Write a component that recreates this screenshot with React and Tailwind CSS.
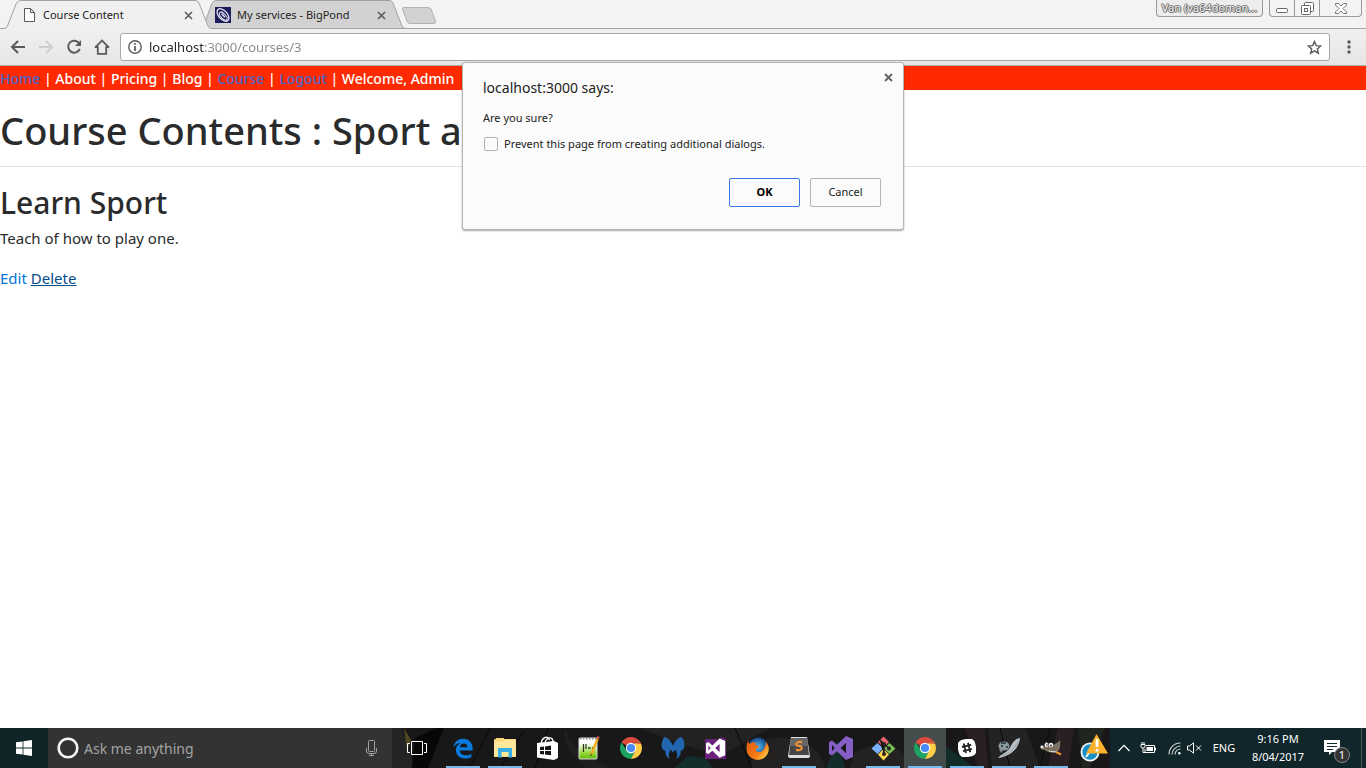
import React from "react";

const ui = "font-['Noto_Sans',sans-serif]";

function TabShapes() {
  return (
    <svg className="absolute left-0 top-0" width="440" height="29" viewBox="0 0 440 29" fill="none" aria-hidden="true">
      <path d="M202 28.5 L205.5 21 L212 3 Q213.5 .5 216 .5 L389 .5 Q392 .5 393 3 L402 26 Q403 28.5 406 28.5 Z" fill="#d2d2d2" stroke="#a2a2a2" />
      <path d="M0 29 V28.500 H4 Q6.500 28.500 7.500 26 L16.500 3 Q18 .5 20.500 .5 H195 Q198 .5 199 3 L208 26 Q209 28.500 211.500 28.500 V29 Z" fill="#f0f0f0" />
      <path d="M0 28.500 H4 Q6.500 28.500 7.500 26 L16.500 3 Q18 .5 20.500 .5 H195 Q198 .5 199 3 L208 26 Q209 28.500 211.500 28.500 H440" stroke="#a2a2a2" />
      <path d="M402.500 9 Q402 7.500 404 7.500 H428 Q430 7.500 431 9 L435.500 21 Q436.500 23.500 434 23.500 H410 Q408 23.500 407 21.500 Z" fill="#d2d2d2" stroke="#b3b3b3" />
    </svg>
  );
}

function Cross({ size = 9, color = "#5a5a5a", width = 1.6 }) {
  return (
    <svg width={size} height={size} viewBox="0 0 9 9" aria-hidden="true">
      <path d="M1 1 L8 8 M8 1 L1 8" stroke={color} strokeWidth={width} />
    </svg>
  );
}

function WindowControls() {
  return (
    <div className="ml-auto flex items-start pr-1">
      <button className="mr-1.5 h-[17px] w-[107px] rounded-b border border-t-0 border-[#9a9a9a] bg-[#ededed] text-[11px] leading-4 text-[#f4f4f4] [text-shadow:1px_0_#555,-1px_0_#777,0_1px_#666,0_-1px_#777]">
        Van (va64doman...
      </button>
      <div className="flex h-[17px] overflow-hidden rounded-b border border-t-0 border-[#9a9a9a]">
        <button aria-label="Minimize" className="flex w-[25px] items-end justify-center border-r border-[#9a9a9a] pb-[3px]">
          <svg width="12" height="5"><rect x=".5" y=".5" width="11" height="4" rx="1" fill="#fff" stroke="#666" /></svg>
        </button>
        <button aria-label="Restore" className="flex w-[25px] items-center justify-center border-r border-[#9a9a9a]">
          <svg width="13" height="13" viewBox="0 0 13 13" fill="#fff" stroke="#666">
            <rect x="3.500" y=".5" width="9" height="9" rx="1" />
            <rect x=".5" y="3.500" width="9" height="9" rx="1" />
            <rect x="3.500" y="6.500" width="3" height="3" />
          </svg>
        </button>
        <button aria-label="Close" className="flex w-[41px] items-center justify-center">
          <svg width="12" height="11" viewBox="0 0 12 11" fill="#fff" stroke="#777">
            <path d="M.5 .5 H3.500 L6 3 L8.500 .5 H11.500 V2 L8 5.500 L11.500 9 V10.500 H8.500 L6 8 L3.500 10.500 H.5 V9 L4 5.500 L.5 2 Z" />
          </svg>
        </button>
      </div>
    </div>
  );
}

function TabStrip() {
  return (
    <div className="relative flex h-[29px] border-b border-[#a2a2a2] bg-[#f3f3f3] text-xs">
      <TabShapes />
      <div className="relative flex w-[204px] items-center pl-6 pr-[11px] pt-0.5">
        <svg className="mr-2 shrink-0" width="11" height="14" viewBox="0 0 11 14" fill="#fff" stroke="#5a5a5a" aria-hidden="true">
          <path d="M.5 .5 H6.500 L10.500 4.500 V13.500 H.5 Z M6.500 .5 V4.500 H10.500" />
        </svg>
        <a href="#course" className="grow text-[11px] text-[#222]">Course Content</a>
        <button aria-label="Close Course Content"><Cross /></button>
      </div>
      <div className="relative flex w-[198px] items-center pl-[11px] pr-4 pt-0.5">
        <svg className="mr-1.5 shrink-0" width="16" height="16" viewBox="0 0 16 16" fill="none" aria-hidden="true">
          <rect width="16" height="16" fill="#1c1c5c" />
          <g stroke="#e8e8f4" transform="rotate(48 8 8)">
            <ellipse cx="8" cy="8" rx="7.500" ry="4.300" strokeWidth="1.300" />
            <ellipse cx="9" cy="8.500" rx="5" ry="2.400" />
            <path d="M6 8 H11" strokeWidth="1.500" />
          </g>
        </svg>
        <a href="#services" className="grow text-[11px] text-[#222]">My services - BigPond</a>
        <button aria-label="Close My services - BigPond"><Cross /></button>
      </div>
      <WindowControls />
    </div>
  );
}

function Toolbar() {
  return (
    <div className="flex h-[37px] items-center border-b border-[#b0b0b0] bg-linear-to-b from-[#f0f0f0] to-[#e6e6e6] pl-2.5 pr-3">
      <div className="flex gap-3 text-[#5a5a5a]">
        <button aria-label="Back">
          <svg width="16" height="16" viewBox="0 0 16 16" fill="none" stroke="#5a5a5a" strokeWidth="2"><path d="M15 8 H2.500 M8 2 L2 8 L8 14" /></svg>
        </button>
        <button aria-label="Forward">
          <svg width="16" height="16" viewBox="0 0 16 16" fill="none" stroke="#cfcfcf" strokeWidth="2"><path d="M1 8 H13.500 M8 2 L14 8 L8 14" /></svg>
        </button>
        <button aria-label="Reload">
          <svg width="16" height="16" viewBox="0 0 16 16" fill="none"><path d="M13.300 4.500 A6 6 0 1 0 13.800 9.800" stroke="#5a5a5a" strokeWidth="2" /><path d="M15 1 V7 H9 Z" fill="#5a5a5a" /></svg>
        </button>
        <button aria-label="Home page">
          <svg width="16" height="16" viewBox="0 0 16 16" fill="none" stroke="#5a5a5a" strokeWidth="1.800"><path d="M1 8.600 L8 1.500 L15 8.600 M1 8.200 H3.800 V14.800 H12.200 V8.200 H15" /></svg>
        </button>
      </div>
      <div className="ml-2.5 flex h-7 grow items-center rounded-[3px] border border-[#a8a8a8] bg-white px-[7px]">
        <svg className="shrink-0" width="14" height="14" viewBox="0 0 14 14" fill="none" aria-hidden="true">
          <circle cx="7" cy="7" r="6.200" stroke="#5a5a5a" strokeWidth="1.400" />
          <path d="M7 3 V4.800 M7 6 V11" stroke="#5a5a5a" strokeWidth="1.700" />
        </svg>
        <input
          aria-label="Address"
          defaultValue="localhost:3000/courses/3"
          className="ml-[7px] w-40 grow bg-[linear-gradient(90deg,#222_56px,#888_56px)] bg-clip-text pt-px text-[13px] text-transparent outline-none"
        />
        <button aria-label="Bookmark this page">
          <svg width="15" height="15" viewBox="0 0 16 16" fill="none" stroke="#5a5a5a" strokeWidth="1.500"><path d="M8 1.700 L9.900 6 L14.600 6.400 L11 9.500 L12.100 14.100 L8 11.600 L3.900 14.100 L5 9.500 L1.400 6.400 L6.100 6 Z" /></svg>
        </button>
      </div>
      <button aria-label="Menu" className="ml-3.5 w-2.5">
        <svg width="10" height="14" viewBox="0 0 10 14" fill="#5a5a5a"><circle cx="5" cy="2" r="1.700" /><circle cx="5" cy="7" r="1.700" /><circle cx="5" cy="12" r="1.700" /></svg>
      </button>
    </div>
  );
}

function Page() {
  return (
    <main className="grow bg-white text-[15px] leading-6 text-[#292b2c]">
      <nav className="h-6 bg-[#ff2a00] pt-px text-sm font-medium leading-6 text-white">
        <a href="#home" className="text-[#4c66c4]">Home</a> | <a href="#about">About</a> | <a href="#pricing">Pricing</a> | <a href="#blog">Blog</a> | <a href="#courses" className="text-[#4c66c4]">Course</a> | <a href="#logout" className="text-[#4c66c4]">Logout</a> | Welcome, Admin
      </nav>
      <h1 className="mt-4 text-[38px] font-medium leading-[48px]">Course Contents : Sport a</h1>
      <hr className="mb-4 mt-3 border-[#e4e4e4]" />
      <h2 className="mb-[3px] text-[30px] font-medium leading-10">Learn Sport</h2>
      <p className="mb-4">Teach of how to play one.</p>
      <a href="#edit" className="text-[#0275d8]">Edit</a> <a href="#delete" className="text-[#014c8c] underline">Delete</a>
    </main>
  );
}

function Dialog() {
  return (
    <div className="absolute inset-x-0 top-[62px] flex justify-center">
      <div role="dialog" aria-labelledby="dialog-title" className="relative w-[442px] rounded-[3px] border border-[#b5b5b5] bg-[#fbfbfb] px-5 pb-[22px] pt-[15px] text-[11px] text-[#222] shadow-[0_1px_2px_rgba(0,0,0,0.35)]">
        <button aria-label="Close dialog" className="absolute right-2.5 top-2.5 flex"><Cross color="#666" width={2} /></button>
        <h2 id="dialog-title" className="text-sm leading-5">localhost:3000 says:</h2>
        <p className="mt-2.5 leading-5">Are you sure?</p>
        <label className="mt-1.5 flex items-center leading-5">
          <input type="checkbox" className="ml-px mr-1.5 size-3.5 appearance-none rounded-xs border border-[#b0b0b0] bg-[#fbfbfb]" />
          Prevent this page from creating additional dialogs.
        </label>
        <div className="mt-6 flex justify-end gap-2.5 pr-0.5">
          <button className="h-[29px] w-[71px] rounded-xs border border-[#3b78e7] font-bold text-black">OK</button>
          <button className="h-[29px] w-[71px] rounded-xs border border-[#b5b5b5]">Cancel</button>
        </div>
      </div>
    </div>
  );
}

function ChromeLogo() {
  return (
    <svg width="22" height="22" viewBox="0 0 22 22">
      <path d="M11 11 L1.500 5.500 A11 11 0 0 1 20.500 5.500 L11 6 Z" fill="#dd4b3e" />
      <path d="M1.500 5.500 A11 11 0 0 0 11 22 L15.300 13.500 L11 11 L6.700 13.500 Z" fill="#1da362" />
      <path d="M20.500 5.500 A11 11 0 0 1 11 22 L15.300 13.500 L14 6 Z" fill="#ffcd46" />
      <path d="M11 6 H20.700 L20.500 5.500 A11 11 0 0 1 21.200 7 Z" fill="#dd4b3e" />
      <circle cx="11" cy="11" r="5.200" fill="#fff" />
      <circle cx="11" cy="11" r="4.100" fill="#4a8af4" />
    </svg>
  );
}

function VisualStudioMark({ color }) {
  return <path fill={color} fillRule="evenodd" d="M17 0 L24 3 V21 L17 24 L8 15.200 L3 19.500 L0 18 V6 L3 4.500 L8 8.800 Z M17 7 L11.500 12 L17 17 Z M3 9 V15 L5.800 12 Z" />;
}

const icons = {
  Edge: (
    <svg width="20" height="21" viewBox="0 0 24 24" fill="#0a7bdc"><path d="M.5 10.500 C1.600 3.800 6.300 .3 12.200 .3 C19.500 .3 23.700 5.700 23.600 12.200 V14.500 H8.200 C8.300 18.500 12 20.200 15.500 20.200 C18 20.200 20.400 19.400 22 18.300 V22.500 C19.700 23.500 17.400 24 14.700 24 C8.300 24 3.500 20.200 3.500 13.800 C3.500 10 5.700 6.900 9.100 5.400 C5.800 5.300 2.700 7.300 .5 10.500 Z M8.300 10.400 H17.300 C17.300 7.500 15.700 5.900 13 5.900 C10.300 5.900 8.700 7.700 8.300 10.400 Z" /></svg>
  ),
  "File Explorer": (
    <svg width="22" height="20" viewBox="0 0 22 20"><path d="M0 2 Q0 1 1 1 H2 V0 H10 V1 H21 Q22 1 22 2 V19 H0 Z" fill="#f8d775" /><path d="M0 3.500 H9 L10.500 2 H22 V18 H0 Z" fill="#ffe79b" /><path d="M4 10 H18 V19.500 H14.500 V14 H7.500 V19.500 H4 Z" fill="#3bafe8" /></svg>
  ),
  Store: (
    <svg width="22" height="24" viewBox="0 0 22 24"><path d="M5 8 C6 1 12 -1 13.500 4 M9 6 C12 0 17 1 17 6" fill="none" stroke="#fff" strokeWidth="1.400" /><path d="M1 7 L18 5 L22 7 V22 L18 24 L1 21.500 Z" fill="#fff" /><path d="M4 11 L8 10.500 V14 H4 Z M9 10.400 L15 9.500 V14 H9 Z M4 15 H8 V18.500 L4 18 Z M9 15 H15 V19.300 L9 18.600 Z" fill="#151515" /></svg>
  ),
  "Notepad++": (
    <svg width="23" height="24" viewBox="0 0 23 24"><defs><linearGradient id="pad" x2="0" y2="1"><stop offset=".25" stopColor="#fff" /><stop offset=".75" stopColor="#8fd52d" /><stop offset="1" stopColor="#62b814" /></linearGradient></defs><rect x="1" y="2" width="18" height="21" rx="1" fill="url(#pad)" stroke="#ddd" /><path d="M2 2.500 H18" stroke="#888" strokeWidth="2" strokeDasharray="1.500 1.500" /><path d="M5.500 8 V16 M8 8 V13" stroke="#283018" strokeWidth="1.200" /><path d="M10 12 H12.500 M14 12 H16" stroke="#283018" strokeWidth="1.500" /><path d="M19.500 3 L13.500 18" stroke="#f0a91e" strokeWidth="2.400" /><path d="M20.500 .5 L19.500 3" stroke="#c95555" strokeWidth="2.600" /><path d="M13.500 18 L12.500 20" stroke="#333" /></svg>
  ),
  "Google Chrome": <ChromeLogo />,
  Malwarebytes: (
    <svg width="24" height="22" viewBox="0 0 24 22" fill="#2266b0"><path d="M3.500 0 C8 1 10.500 5 12 9 C13.500 5 16 1 20.500 0 C24 4 24.500 11 21.500 13 L19.500 14 C20 17 19 20 15 22 C17 19 16 17 15.500 15 L14.500 12.500 L12 15.500 L9.500 12.500 L8.500 15 C8 17 7 19 9 22 C5 20 4 17 4.500 14 L2.500 13 C-.5 11 0 4 3.500 0 Z" /></svg>
  ),
  "Visual Studio Blend": (
    <svg width="23" height="24" viewBox="0 0 23 24"><path d="M1 3 L15 3 L17 1 L22 3 V23 H1 Z" fill="#69217a" /><g transform="translate(2 2.500) scale(.8)"><VisualStudioMark color="#fff" /></g></svg>
  ),
  Firefox: (
    <svg width="23" height="23" viewBox="0 0 23 23"><defs><linearGradient id="fox" x2="1" y2=".8"><stop stopColor="#e45b12" /><stop offset=".65" stopColor="#f47a16" /><stop offset="1" stopColor="#ffd84a" /></linearGradient><radialGradient id="globe"><stop stopColor="#58b7e5" /><stop offset="1" stopColor="#14478f" /></radialGradient></defs><circle cx="12" cy="10" r="9.500" fill="url(#globe)" /><path d="M2 3 L3 7 L7 5 L10 6 C8 8 11 9 13 8 L12 11 C9 12 9 15 13 15 C17 15 20 10 20 5 C24 9 24 17 18 21 C12 25 3 22 1 15 C0 10 1 7 2 3 Z" fill="url(#fox)" /></svg>
  ),
  "Sublime Text": (
    <svg width="22" height="22" viewBox="0 0 22 22"><path d="M3 0 H19 L22 19 Q22 21 20 21 H2 Q0 21 0 19 Z" fill="#ddd" /><path d="M3 1 H19 L21 18 H1 Z" fill="#454545" /><path d="M3 1 H19 L20 9 H2 Z" fill="#666" /><path d="M14 5.500 C10 3.500 6.500 7 9 8.500 L13 9.500 C15.500 11.500 12 14.500 8 12.500" fill="none" stroke="#f79331" strokeWidth="2" /></svg>
  ),
  "Visual Studio": <svg width="24" height="24" viewBox="0 0 24 24"><VisualStudioMark color="#865fc5" /></svg>,
  Git: (
    <svg width="25" height="25" viewBox="0 0 25 25"><path d="M12.500 .5 L18 6 L12.500 11.500 L7 6 Z" fill="#e8636a" /><path d="M6.500 7 L12 12.500 L6.500 18 L.5 12.500 Z" fill="#7bafff" /><path d="M18.500 7 L24.500 12.500 L18.500 18 L13 12.500 Z" fill="#77bd55" /><path d="M12.500 13 L18 18.500 L12.500 24.500 L7 18.500 Z" fill="#ffd34f" /><path d="M9 4 L13 8 V19 M13 8 L18 12" stroke="#28221f" strokeWidth="1.500" /><circle cx="13" cy="8" r="2" fill="#28221f" /><circle cx="13" cy="18" r="2" fill="#28221f" /><circle cx="18" cy="12.500" r="2" fill="#28221f" /></svg>
  ),
  "Google Chrome window": <ChromeLogo />,
  Slack: (
    <svg width="18" height="18" viewBox="0 0 18 18"><rect width="18" height="18" rx="6" fill="#fff" transform="rotate(-12 9 9)" /><path d="M5.700 4.500 L8 14 M10 3.800 L12.300 13.200 M4 8 L13.200 5.800 M5 12.200 L14 10" stroke="#222" strokeWidth="1.800" /></svg>
  ),
  "Database client": (
    <svg width="22" height="22" viewBox="0 0 22 22"><path d="M22 1 C21 12 12 19 0 21 C3 17 8 16 11 12 C14 8 15 2 22 1 Z" fill="#b5c0c4" /><path d="M20 5 C17 11 11 17 4 19" fill="none" stroke="#8d9a9f" strokeWidth=".7" /><ellipse cx="6" cy="9" rx="5.500" ry="4.500" fill="#8b999e" /><path d="M3 6 H8 M3 9 H5 M8 10 H10" stroke="#24353d" strokeWidth="1.500" /><path d="M1 12 L5 13 L3 16 Z" fill="#7c8b90" /></svg>
  ),
  GIMP: (
    <svg width="22" height="17" viewBox="0 0 22 17"><path d="M20 0 C21 6 20 12 14 13 C9 13 5 10 1 9 C5 4 14 8 20 0 Z" fill="#7c7160" /><path d="M5 5 L6 1 L9 4 Z" fill="#706653" /><circle cx="6.500" cy="5" r="2" fill="#fff" /><circle cx="11" cy="5" r="2.200" fill="#fff" /><circle cx="7" cy="5" r=".8" fill="#111" /><circle cx="11" cy="5.500" r=".9" fill="#111" /><circle cx="2" cy="7" r="1.700" fill="#ddd" /><path d="M9 11 L17 12" stroke="#ddd" strokeWidth="1.200" /><path d="M16 12 L21 14.500" stroke="#ed8c2b" strokeWidth="2.200" /></svg>
  ),
};

const running = ["Edge", "File Explorer", "Sublime Text", "Git", "Google Chrome window", "Slack", "Database client", "GIMP"];

function TaskbarArt() {
  return (
    <svg className="absolute inset-0 size-full" viewBox="0 0 1366 40" preserveAspectRatio="none" aria-hidden="true">
      <path d="M392 0 H1110 V40 H392 Z" fill="#191818" />
      <path d="M392 0 H402 L415 40 H392 Z" fill="#222425" />
      <path d="M404 0 L411 12 L407 22 Z" fill="#514a20" />
      <path d="M415 10 L436 0 H444 L428 40 H412 Z" fill="#060707" />
      <path d="M565 0 C570 20 590 30 610 40 H585 C570 25 562 15 565 0 Z" fill="#201f1f" />
      <path d="M674 40 L688 28 L705 30 L713 40 Z M826 40 L838 12 L845 40 Z M918 40 L940 14 L975 40 Z" fill="#122d2a" />
      <path d="M640 0 H770 L720 28 L670 12 Z M755 15 C770 5 820 8 825 40 H750 Z M855 24 C880 10 905 18 912 40 H850 Z" fill="#242220" />
      <path d="M965 0 H985 L988 40 H978 Z M1058 0 H1074 L1068 40 H1048 Z" fill="#2a2024" />
      <path d="M988 0 H1025 L1040 40 H992 Z" fill="#242324" />
      <path d="M1078 0 H1105 L1090 40 H1082 Z" fill="#202520" />
      <path d="M470 40 L490 0 M500 40 L524 3 M535 40 L548 0 M735 0 L752 40 M1000 0 L1010 40 M1050 0 L1040 40" stroke="#080808" />
      <path d="M1361.500 0 V40" stroke="#4b5a5d" />
    </svg>
  );
}

function Tray() {
  return (
    <div className="ml-auto flex h-full items-center pr-2.5 text-white">
      <button aria-label="Connection alert" className="flex w-11 justify-center">
        <svg width="28" height="28" viewBox="0 0 28 28"><circle cx="10" cy="18" r="9.500" fill="#f2f7fa" /><circle cx="10" cy="18" r="7.700" fill="#188fc8" /><path d="M6 23 L11 16 L14 18" fill="none" stroke="#fff" strokeWidth="2" /><path d="M16.500 0 L28 19.500 H6 Z" fill="#fbb12b" /><path d="M17 5 V13 M17 15 V17.500" stroke="#fff" strokeWidth="2.800" /></svg>
      </button>
      <button aria-label="Show hidden icons" className="flex w-4 justify-center">
        <svg width="12" height="8" viewBox="0 0 12 8" fill="none" stroke="#fff" strokeWidth="1.200"><path d="M.5 7 L6 1.300 L11.500 7" /></svg>
      </button>
      <button aria-label="Battery" className="flex w-8 justify-center">
        <svg width="16" height="13" viewBox="0 0 16 13" fill="none" stroke="#fff"><path d="M1 2.500 H5 V5 Q5 6 3 6 Q1 6 1 5 Z M2 0 V2 M4 0 V2 M3 6 V10.500 H5 M6 3.500 H14.500 V10.500 H5 V7 M15.500 5.500 V8.500" /><path d="M6.500 5 H13 V9 H6.500 Z" fill="#fff" stroke="none" /></svg>
      </button>
      <button aria-label="Wireless network" className="flex w-5 justify-center">
        <svg width="13" height="13" viewBox="0 0 13 13" fill="none" stroke="#c9d0d0" strokeWidth="1.200"><path d="M1 12.500 C1 6 6 1 12.500 1 M4 12.500 C4 8 8 4 12.500 4 M7 12.500 C7 9.500 9.500 7 12.500 7" /><circle cx="11.300" cy="11.300" r="1.300" fill="#fff" stroke="none" /></svg>
      </button>
      <button aria-label="Volume muted" className="flex w-5 justify-center">
        <svg width="15" height="12" viewBox="0 0 15 12" fill="none" stroke="#fff"><path d="M.5 4 H2.500 L6.500 .8 V11.200 L2.500 8 H.5 Z M9 3.500 L14 8.500 M14 3.500 L9 8.500" /></svg>
      </button>
      <button className="w-10 text-[11px]">ENG</button>
      <button className="w-[68px] text-center text-[11px] leading-[18px]">9:16 PM<br />8/04/2017</button>
      <button aria-label="Notifications" className="relative flex h-10 w-[46px] items-center pl-3">
        <svg width="16" height="16" viewBox="0 0 16 16"><path d="M0 0 H16 V12 H8 L5 15 V12 H0 Z" fill="#fff" /><path d="M3 3.500 H13 M3 6.500 H13 M3 9.500 H9" stroke="#11262a" /></svg>
        <span className="absolute bottom-[5px] right-2 size-4 rounded-full border border-[#888] bg-[#333] text-[11px] leading-[14px]">1</span>
      </button>
    </div>
  );
}

function Taskbar() {
  return (
    <footer className="relative flex h-10 shrink-0 overflow-hidden bg-[#11262a]">
      <TaskbarArt />
      <div className="relative flex grow items-center">
        <button aria-label="Start" className="flex h-10 w-12 items-center justify-center bg-[#0e2427]">
          <svg width="16" height="16" viewBox="0 0 16 16" fill="#fff"><path d="M0 2.300 L6.600 1.400 V7.600 H0 Z M7.400 1.200 L16 0 V7.600 H7.400 Z M0 8.400 H6.600 V14.600 L0 13.700 Z M7.400 8.400 H16 V16 L7.400 14.800 Z" /></svg>
        </button>
        <div className="flex h-10 w-[344px] items-center bg-[#333] pl-[9px] pr-[15px]">
          <svg className="shrink-0" width="22" height="22" viewBox="0 0 22 22" fill="none" aria-hidden="true"><circle cx="11" cy="11" r="9.300" stroke="#f5f5f5" strokeWidth="2.600" /></svg>
          <input aria-label="Search" placeholder="Ask me anything" className="ml-[5px] w-0 grow bg-transparent pt-px text-sm outline-none placeholder:text-[#a3a3a3]" />
          <button aria-label="Voice search">
            <svg width="11" height="16" viewBox="0 0 11 16" fill="none" stroke="#a3a3a3"><rect x="2.500" y=".5" width="6" height="11" rx="1" /><path d="M.5 8 V11 Q.5 13.500 3 13.500 H8 Q10.500 13.500 10.500 11 V8 M5.500 13.500 V15.500 M3 15.500 H8" /></svg>
          </button>
        </div>
        <button aria-label="Task view" className="flex h-10 w-[50px] items-center justify-center">
          <svg width="20" height="14" viewBox="0 0 20 14" fill="none" stroke="#fff"><path d="M4.500 .5 H15.500 V13.500 H4.500 Z M3 2.500 H.5 V11.500 H3 M17 2.500 H19.500 V11.500 H17" /></svg>
        </button>
        <div className="flex">
          {Object.entries(icons).map(([name, icon]) => (
            <button
              key={name}
              aria-label={name}
              className={"relative flex h-10 w-[42px] items-center justify-center " + (name === "Google Chrome window" ? "bg-[#454d4c]" : "")}
            >
              {icon}
              {running.includes(name) && <span className="absolute inset-x-1 bottom-0 h-0.5 bg-[#76b9ed]" />}
            </button>
          ))}
        </div>
        <Tray />
      </div>
    </footer>
  );
}

export default function App() {
  return (
    <div className={"relative flex min-h-screen flex-col " + ui}>
      <header>
        <TabStrip />
        <Toolbar />
      </header>
      <Page />
      <Dialog />
      <Taskbar />
    </div>
  );
}
